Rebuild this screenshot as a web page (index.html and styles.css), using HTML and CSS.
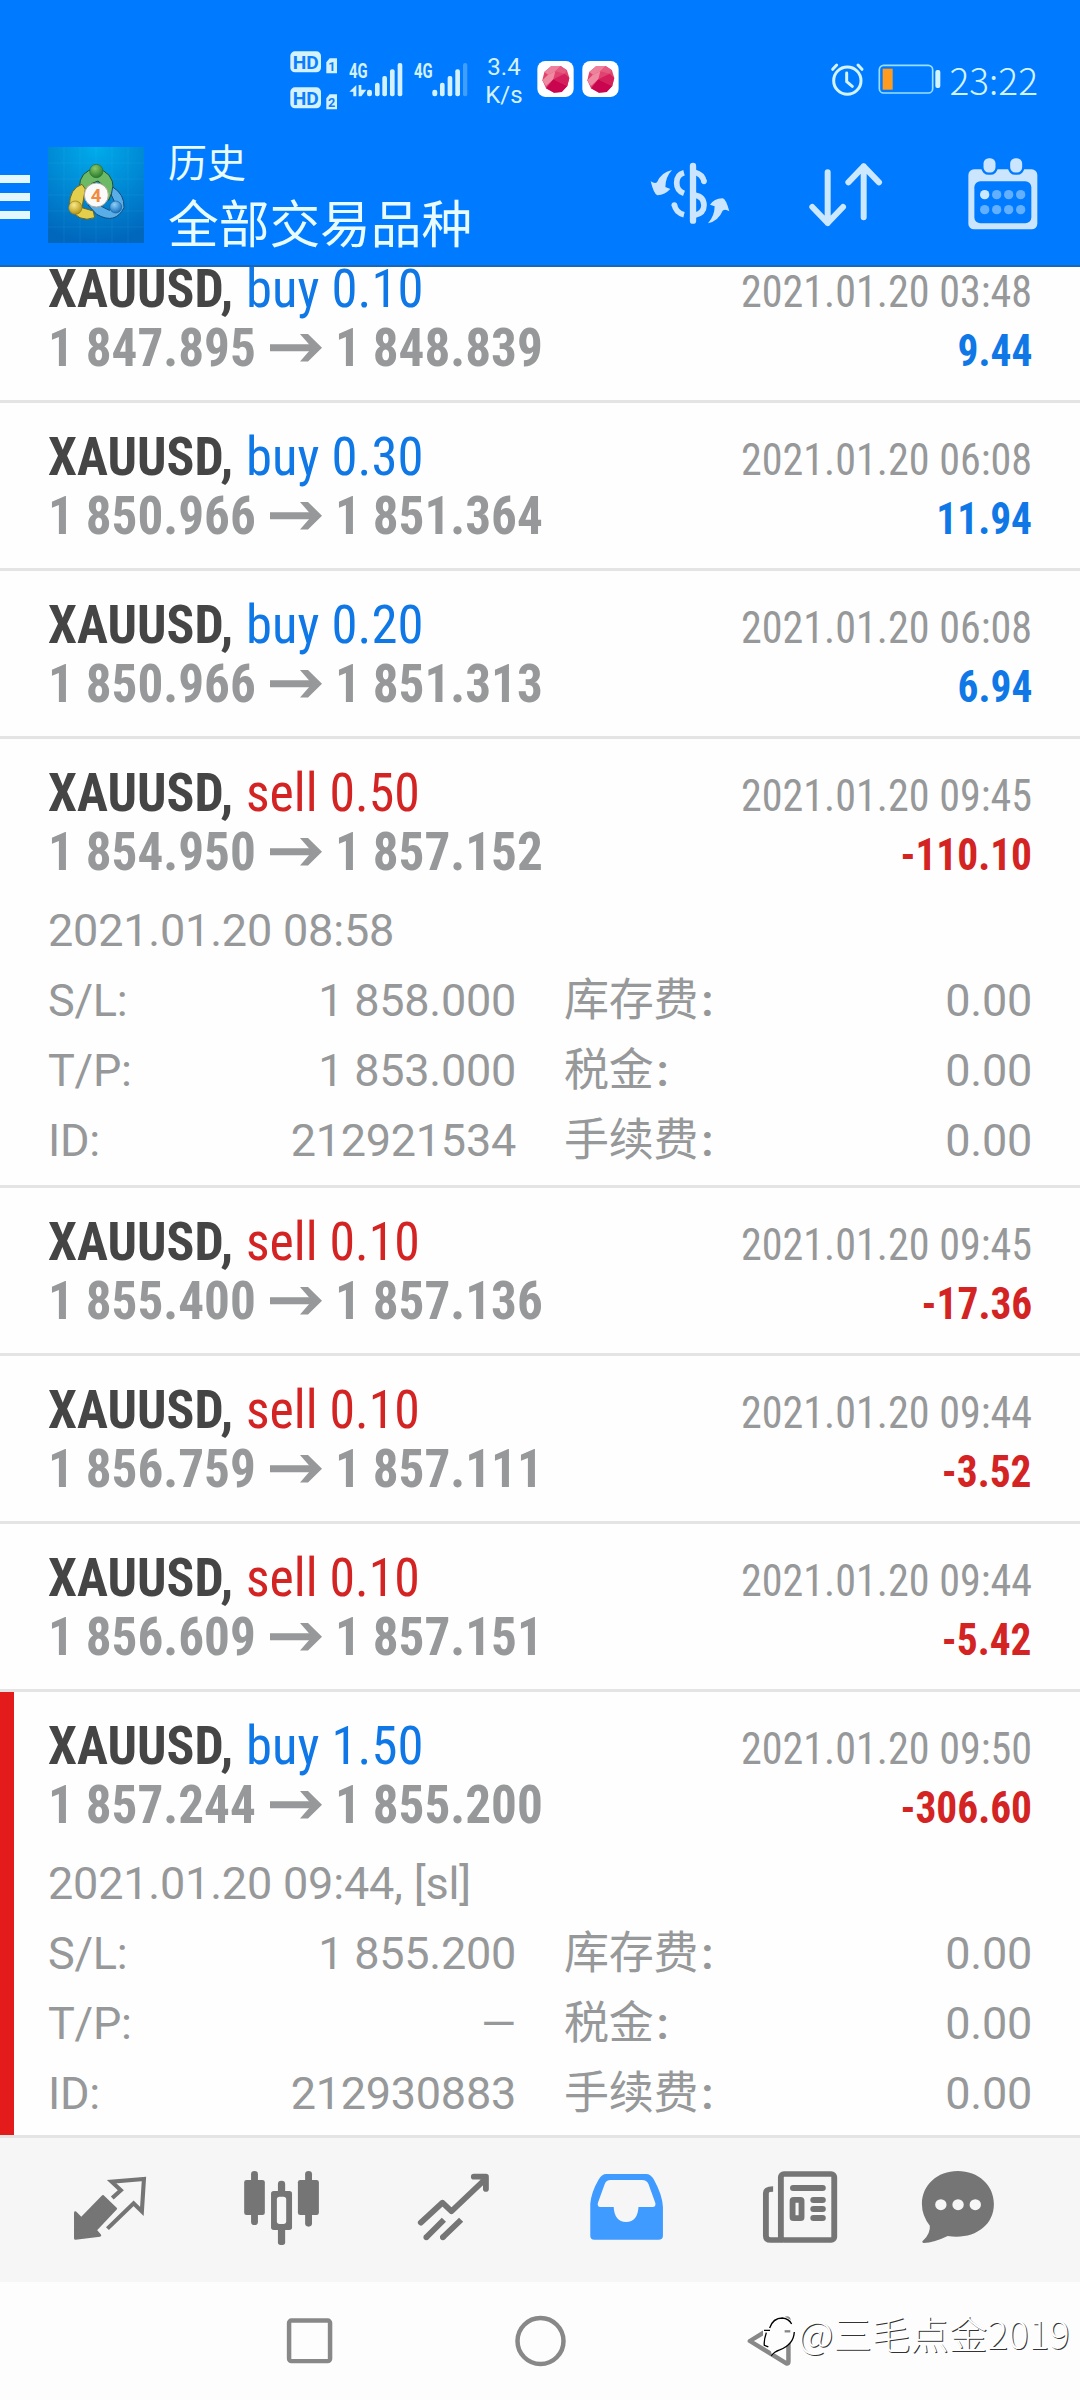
FILE: index.html
```html
<!DOCTYPE html>
<html lang="zh-CN">
<head>
<meta charset="utf-8">
<title>历史</title>
<link rel="stylesheet" href="styles.css">
</head>
<body>
<div class="screen">
  <header class="top">
    <div class="status">
      <svg class="signals" viewBox="50 50 550 200" width="183.3" height="66.7">
        <g fill="#d3f2fd">
          <rect x="60" y="63" width="92" height="63" rx="14"/>
          <rect x="60" y="171" width="92" height="63" rx="14"/>
          <path d="M178 84h22v45h-32V96zM178 192h22v45h-32V204z"/>
          <rect x="290" y="178" width="15" height="20" rx="7"/>
          <rect x="314" y="157" width="14" height="41" rx="6"/>
          <rect x="336" y="137" width="14" height="61" rx="6"/>
          <rect x="359" y="117" width="14" height="81" rx="6"/>
          <rect x="382" y="98" width="14" height="100" rx="6"/>
          <rect x="486" y="178" width="15" height="20" rx="7"/>
          <rect x="509" y="157" width="14" height="41" rx="6"/>
          <rect x="532" y="137" width="14" height="61" rx="6"/>
          <rect x="555" y="117" width="14" height="81" rx="6"/>
          <rect x="578" y="98" width="13" height="100" rx="6" opacity=".3"/>
          <path d="M258 164v34h-9v-14h-12zM265 164h8v14h15l-15 20h-8z"/>
        </g>
        <g class="badge-text">
          <text x="67" y="117" font-size="57" textLength="78" lengthAdjust="spacingAndGlyphs">HD</text>
          <text x="67" y="225" font-size="57" textLength="78" lengthAdjust="spacingAndGlyphs">HD</text>
          <text x="174" y="121" font-size="38">1</text>
          <text x="173" y="229" font-size="38">2</text>
        </g>
        <g class="net-text">
          <text x="236" y="142" font-size="59" textLength="56" lengthAdjust="spacingAndGlyphs">4G</text>
          <text x="431" y="142" font-size="59" textLength="56" lengthAdjust="spacingAndGlyphs">4G</text>
        </g>
      </svg>
      <div class="speed"><span>3.4</span><span>K/s</span></div>
      <svg class="gems" viewBox="800 90 250 115" width="83.3" height="38.3">
        <defs>
          <g id="gem">
            <rect x="801" y="93" width="109" height="108" rx="24" fill="#fff"/>
            <path d="M843 108h28l19 13 7 23-6 24-17 18-23 2-24-13-11-24 6-25z" fill="#e0436f"/>
            <path d="M843 108h28l-16 16-22 10-11-8z" fill="#ed819b"/>
            <path d="M871 108l19 13-7 10-28-7z" fill="#e55a80"/>
            <path d="M816 151l17-17 22-10-6 24-22 20z" fill="#ee8aa1"/>
            <path d="M827 175l22-27 42 20-17 18-23 2z" fill="#c9054f"/>
            <path d="M883 131l14 13-6 24-42-20z" fill="#d41f5c"/>
          </g>
        </defs>
        <use href="#gem"/><use href="#gem" x="135"/>
      </svg>
      <svg class="alarm" viewBox="85 60 110 115" width="36.7" height="38.3" fill="none" stroke="#d3f4ff" stroke-width="9" stroke-linecap="round" stroke-linejoin="round">
        <circle cx="140" cy="122" r="41"/><path d="M138 99v26l17 14M96 88l12-13M184 88l-12-13"/>
      </svg>
      <svg class="battery" viewBox="230 70 195 95" width="65" height="31.7">
        <rect x="237" y="77" width="160" height="83" rx="13" fill="none" stroke="#9adfff" stroke-width="5"/>
        <rect x="247" y="87" width="30" height="63" fill="#ff9b1e"/>
        <rect x="405" y="91" width="15" height="54" rx="6" fill="#d3f4ff"/>
      </svg>
      <span class="clock">23:22</span>
    </div>
    <div class="appbar">
      <div class="menu"><i></i><i></i><i></i></div>
      <svg class="logo" viewBox="144 50 288 288" width="96" height="96">
        <defs>
          <radialGradient id="sky" cx=".5" cy="0" r="1"><stop offset="0" stop-color="#00acec"/><stop offset=".55" stop-color="#0086d2"/><stop offset="1" stop-color="#0067bd"/></radialGradient>
          <radialGradient id="gr" cx=".4" cy=".3" r=".7"><stop offset="0" stop-color="#8cc86a"/><stop offset="1" stop-color="#2a7d2c"/></radialGradient>
          <radialGradient id="ye" cx=".4" cy=".3" r=".7"><stop offset="0" stop-color="#fbe98a"/><stop offset="1" stop-color="#b39414"/></radialGradient>
          <radialGradient id="bl" cx=".4" cy=".3" r=".7"><stop offset="0" stop-color="#8fd0f8"/><stop offset="1" stop-color="#1871bd"/></radialGradient>
        </defs>
        <rect x="144" y="50" width="288" height="288" fill="url(#sky)"/>
        <path d="M144 98h288M144 146h288M144 194h288M144 242h288M144 290h288M192 50v288M240 50v288M288 50v288M336 50v288M384 50v288" stroke="#5ad0f5" stroke-opacity=".15" stroke-width="2"/>
        <g stroke="#1d4f35" stroke-width="3">
          <path d="M238 172q0-50 50-58q52 10 52 62l-14 34-22-28 8-14-18-16-20 8-20 22z" fill="#6dba66"/>
          <path d="M246 162q-38 12-38 66q26 52 76 34l-4-20-34-10 10-56z" fill="#e3cf4c" stroke="#6c6420"/>
          <path d="M338 170q36 22 34 62q-26 52-82 20l-26-28 24-4 40 20 20-16-14-30z" fill="#5aaee8" stroke="#174c7c"/>
        </g>
        <circle cx="289" cy="122" r="20" fill="url(#gr)" stroke="#256b34" stroke-width="2"/>
        <circle cx="226" cy="232" r="20" fill="url(#ye)" stroke="#8a7a1c" stroke-width="2"/>
        <circle cx="347" cy="230" r="18" fill="url(#bl)" stroke="#1d5f9c" stroke-width="2"/>
        <circle cx="289" cy="194" r="36" fill="#fafafa" stroke="#b9a78f" stroke-width="3"/>
        <text class="logo-digit" x="288" y="215" text-anchor="middle">4</text>
      </svg>
      <div class="titles"><span class="title">历史</span><span class="subtitle">全部交易品种</span></div>
      <svg class="act dollar" viewBox="90 95 240 187" width="80" height="62.3">
        <g fill="none" stroke="#cbe5ff" stroke-width="17">
          <path d="M219 107v164" stroke-width="19" stroke-linecap="round"/>
          <path d="M192 127q-22 6-22 30q0 24 22 32"/>
          <path d="M163 223q4 24 29 30"/>
          <path d="M163 224v0M252 153v0" stroke-linecap="round"/>
          <path d="M224 126q24 6 28 28"/>
          <path d="M224 194q28 5 28 31q0 24-28 30"/>
        </g>
        <path fill="#cbe5ff" d="M156 119q-20 22-20 51l15 6q-16 17-39 19q-10-2-20-42q12 8 19 3q12-30 45-37zM264 279q20-22 20-51l-14-5q12-18 37-19q10-1 21 39q-12-8-20-2q-12 30-44 38z"/>
      </svg>
      <svg class="act sort" viewBox="565 95 230 197" width="76.7" height="65.7" fill="none" stroke="#cbe8ff" stroke-width="18" stroke-linecap="round" stroke-linejoin="round">
        <path d="M624 126v152M578 230l46 48 46-48M732 261V108M686 156l46-48 46 48"/>
      </svg>
      <svg class="act cal" viewBox="1040 80 215 220" width="71.7" height="73.3">
        <rect x="1044" y="117" width="207" height="180" rx="17" fill="#cbe5ff"/>
        <rect x="1062" y="153" width="171" height="126" rx="18" fill="#007aff"/>
        <g fill="#cbe5ff" stroke="#007aff" stroke-width="7"><rect x="1086" y="80" width="43" height="50" rx="19"/><rect x="1166" y="80" width="43" height="50" rx="19"/></g>
        <circle cx="1093" cy="193" r="14" fill="#cbe8ff"/>
        <g fill="#62b0ff"><circle cx="1129" cy="193" r="14"/><circle cx="1165" cy="193" r="14"/><circle cx="1201" cy="193" r="14"/><circle cx="1093" cy="238" r="14"/><circle cx="1129" cy="238" r="14"/><circle cx="1165" cy="238" r="14"/><circle cx="1201" cy="238" r="14"/></g>
      </svg>
    </div>
  </header>

  <svg width="0" height="0" class="defs"><defs>
    <g id="arrow" fill="#969899"><path d="M0 10.2h45v7H0z"/><path d="M30 0h8l14 13.7-14 13.7h-8l12-13.7z"/></g>
  </defs></svg>

  <main class="list">
    <section class="deal">
      <div class="line"><div class="name"><b>XAUUSD,</b> <span class="buy">buy 0.10</span></div><div class="time">2021.01.20 03:48</div></div>
      <div class="line second"><div class="price"><span>1 847.895</span><svg width="52" height="28"><use href="#arrow"/></svg><span>1 848.839</span></div><div class="profit plus">9.44</div></div>
    </section>
    <section class="deal">
      <div class="line"><div class="name"><b>XAUUSD,</b> <span class="buy">buy 0.30</span></div><div class="time">2021.01.20 06:08</div></div>
      <div class="line second"><div class="price"><span>1 850.966</span><svg width="52" height="28"><use href="#arrow"/></svg><span>1 851.364</span></div><div class="profit plus">11.94</div></div>
    </section>
    <section class="deal">
      <div class="line"><div class="name"><b>XAUUSD,</b> <span class="buy">buy 0.20</span></div><div class="time">2021.01.20 06:08</div></div>
      <div class="line second"><div class="price"><span>1 850.966</span><svg width="52" height="28"><use href="#arrow"/></svg><span>1 851.313</span></div><div class="profit plus">6.94</div></div>
    </section>
    <section class="deal open">
      <div class="line"><div class="name"><b>XAUUSD,</b> <span class="sell">sell 0.50</span></div><div class="time">2021.01.20 09:45</div></div>
      <div class="line second"><div class="price"><span>1 854.950</span><svg width="52" height="28"><use href="#arrow"/></svg><span>1 857.152</span></div><div class="profit minus">-110.10</div></div>
      <div class="opened">2021.01.20 08:58</div>
      <div class="details">
        <div><span>S/L:</span><span>1 858.000</span></div><div><span>库存费<i>:</i></span><span>0.00</span></div>
        <div><span>T/P:</span><span>1 853.000</span></div><div><span>税金<i>:</i></span><span>0.00</span></div>
        <div><span>ID:</span><span>212921534</span></div><div><span>手续费<i>:</i></span><span>0.00</span></div>
      </div>
    </section>
    <section class="deal">
      <div class="line"><div class="name"><b>XAUUSD,</b> <span class="sell">sell 0.10</span></div><div class="time">2021.01.20 09:45</div></div>
      <div class="line second"><div class="price"><span>1 855.400</span><svg width="52" height="28"><use href="#arrow"/></svg><span>1 857.136</span></div><div class="profit minus">-17.36</div></div>
    </section>
    <section class="deal">
      <div class="line"><div class="name"><b>XAUUSD,</b> <span class="sell">sell 0.10</span></div><div class="time">2021.01.20 09:44</div></div>
      <div class="line second"><div class="price"><span>1 856.759</span><svg width="52" height="28"><use href="#arrow"/></svg><span>1 857.111</span></div><div class="profit minus">-3.52</div></div>
    </section>
    <section class="deal">
      <div class="line"><div class="name"><b>XAUUSD,</b> <span class="sell">sell 0.10</span></div><div class="time">2021.01.20 09:44</div></div>
      <div class="line second"><div class="price"><span>1 856.609</span><svg width="52" height="28"><use href="#arrow"/></svg><span>1 857.151</span></div><div class="profit minus">-5.42</div></div>
    </section>
    <section class="deal open stopped">
      <div class="line"><div class="name"><b>XAUUSD,</b> <span class="buy">buy 1.50</span></div><div class="time">2021.01.20 09:50</div></div>
      <div class="line second"><div class="price"><span>1 857.244</span><svg width="52" height="28"><use href="#arrow"/></svg><span>1 855.200</span></div><div class="profit minus">-306.60</div></div>
      <div class="opened">2021.01.20 09:44, [sl]</div>
      <div class="details">
        <div><span>S/L:</span><span>1 855.200</span></div><div><span>库存费<i>:</i></span><span>0.00</span></div>
        <div><span>T/P:</span><span>—</span></div><div><span>税金<i>:</i></span><span>0.00</span></div>
        <div><span>ID:</span><span>212930883</span></div><div><span>手续费<i>:</i></span><span>0.00</span></div>
      </div>
    </section>
  </main>

  <nav class="tabs">
    <svg viewBox="69.7 24 499.5 432" preserveAspectRatio="none">
      <path fill="#757575" stroke="#757575" stroke-width="8" stroke-linejoin="round" d="M219 248l17 18 63-67 37 37-59 64 13 16-71 9z"/>
      <path fill="none" stroke="#757575" stroke-width="12" d="M326 204l25-23-27-26 94-8-6 97-24-24-76 76"/>
    </svg>
    <svg viewBox="569.1 24 499.5 432" preserveAspectRatio="none" fill="#757575">
      <rect x="729" y="123" width="20" height="162" rx="10"/><rect x="709" y="150" width="60" height="105" rx="7"/>
      <rect x="886" y="123" width="20" height="167" rx="10"/><rect x="865" y="150" width="61" height="105" rx="7"/>
      <rect x="807" y="152" width="21" height="40" rx="10"/><rect x="807" y="290" width="21" height="55" rx="8"/>
      <rect x="787" y="183" width="61" height="117" rx="8"/><rect x="804" y="200" width="27" height="82" rx="8" fill="#f6f6f6"/>
    </svg>
    <svg viewBox="1068.6 24 499.5 432" preserveAspectRatio="none" fill="none" stroke="#757575" stroke-width="17" stroke-linejoin="round">
      <path stroke-linecap="round" d="M1222 278l63-60 26 26 98-96M1376 140h35v37M1238 322v0M1286 322v0"/>
      <path d="M1238 322l51-53M1286 322l53-53"/>
      <path fill="#757575" stroke="none" d="M1390 140h22v30z"/>
    </svg>
    <svg viewBox="0 24 499.5 432" preserveAspectRatio="none">
      <path fill="#3f9bff" d="M193 132h115q14 0 23 17q25 47 26 82v86q0 12-13 12H158q-12 0-12-12v-96q3-35 24-72q9-17 23-17z"/>
      <path fill="#f6f6f6" d="M205 150h91q14 0 19 12l20 57q2 12-8 12h-41q-2 44-36 45q-34-1-36-45h-39q-9 0-7-12l20-57q4-12 17-12z"/>
    </svg>
    <svg viewBox="499.5 24 499.5 432" preserveAspectRatio="none">
      <path fill="none" stroke="#757575" stroke-width="17" d="M677 177q-21 0-21 12v128q0 13 14 13h35"/>
      <rect x="699.500" y="132" width="155" height="198" rx="9" fill="none" stroke="#757575" stroke-width="17"/>
      <g fill="#757575"><rect x="726" y="165" width="104" height="18" rx="9"/><rect x="785" y="201" width="45" height="18" rx="9"/><rect x="785" y="228" width="45" height="18" rx="9"/><rect x="785" y="255" width="45" height="18" rx="9"/></g>
      <rect x="733.500" y="209.500" width="26" height="55" rx="3" fill="none" stroke="#757575" stroke-width="17"/>
    </svg>
    <svg viewBox="998.9 24 499.5 432" preserveAspectRatio="none">
      <path fill="#757575" d="M1213 123c60 0 105 42 105 99c0 68-61 108-134 96q-40 20-70 21q-8-3 0-9q20-21 18-43q-23-30-23-65c0-57 45-99 104-99z"/>
      <g fill="#f6f6f6"><circle cx="1164" cy="224" r="16.500"/><circle cx="1214" cy="224" r="16.500"/><circle cx="1264" cy="224" r="16.500"/></g>
    </svg>
  </nav>

  <div class="sysnav">
    <svg viewBox="561.9 456 670.8 354" preserveAspectRatio="none"><rect x="838" y="571.500" width="119" height="122" rx="7" fill="none" stroke="#888" stroke-width="13"/></svg>
    <svg viewBox="0 0 231 118"><circle cx="115.500" cy="59" r="23" fill="none" stroke="#888" stroke-width="4.500"/></svg>
    <svg viewBox="335.4 456 670.8 354" preserveAspectRatio="none">
      <path fill="none" stroke="#888" stroke-width="13" stroke-linejoin="round" d="M608 633l106-67q6-2 6 5v124q0 7-6 5z"/>
    </svg>
    <div class="watermark">
      <svg viewBox="100 65 100 130" width="33.3" height="43.3">
        <path fill="#fdfdfd" d="M92 108q14-42 62-40q42 6 42 48q-6 36-46 52q-14 6-22 20l-8-26-22-14z"/>
        <path fill="none" stroke="#000" stroke-width="4" d="M120 104q10-30 38-30q20 2 28 18M103 111h18M110 118q-8 24-6 38l12 5M194 116q-2 38-44 54q-16 5-25 18"/>
        <path stroke="#888" stroke-width="7" d="M165 114h17"/>
      </svg>
      <span>@三毛点金2019</span>
    </div>
  </div>
</div>
</body>
</html>
```

FILE: styles.css
```css
* { box-sizing: border-box; }
body { margin: 0; background: #fdfdfd; }
svg { display: block; flex: none; }
.defs { position: absolute; }
.screen {
  width: 1080px;
  height: 2400px;
  display: flex;
  flex-direction: column;
  overflow: hidden;
  font-family: Roboto, "Noto Sans CJK SC", sans-serif;
}

/* header */
.top {
  height: 267px;
  flex: none;
  background: #007aff;
  border-bottom: 2px solid #1c66b4;
}
.status {
  height: 130px;
  padding: 0 0 0 286.700px;
  display: flex;
  align-items: flex-start;
}
.signals { margin-top: 46.700px; }
.badge-text { font-family: Roboto, sans-serif; font-weight: 700; fill: #0b7dff; }
.net-text { font-family: Roboto, sans-serif; font-weight: 700; fill: #d3f2fd; }
.speed {
  width: 64px;
  flex: none;
  margin: 53px 0 0 2px;
  display: flex;
  flex-direction: column;
  align-items: center;
  font-size: 24px;
  line-height: 28px;
  color: #d3f2fd;
}
.gems { margin: 60px 0 0 0.700px; }
.alarm { margin: 60px 0 0 208.700px; }
.battery { margin: 63.300px 0 0 11.700px; }
.clock {
  margin: 56px 0 0 7.500px;
  font-family: "Noto Sans CJK SC", sans-serif;
  font-weight: 300;
  font-size: 37px;
  line-height: 46px;
  color: #d3f4ff;
}
.appbar { height: 135px; display: flex; align-items: flex-start; }
.menu { width: 30px; margin-top: 45px; display: grid; gap: 10px; }
.menu i { height: 8px; background: #e3f7ff; }
.logo { margin: 17px 0 0 18px; }
.logo-digit { font-family: Roboto, sans-serif; font-weight: 700; font-size: 56px; fill: #f28b3c; }
.titles {
  width: 481px;
  margin: 3px 0 0 24px;
  display: flex;
  flex-direction: column;
  color: #e8fbff;
  font-family: "Noto Sans CJK SC", sans-serif;
}
.title { font-size: 39px; line-height: 54px; }
.subtitle { font-size: 50.700px; line-height: 68px; }
.dollar { margin: 31.700px 0 0 1px; }
.sort { margin: 31.700px 0 0 78.300px; }
.cal { margin: 26.700px 0 0 81.700px; }

/* deals */
.list { height: 1868px; flex: none; overflow: hidden; background: #fefefe; }
.deal { height: 168px; padding: 24px 48px 0; border-bottom: 3px solid #e4e4e4; }
.deal:first-child { margin-top: -32px; }
.deal.open { height: 449px; }
.stopped { position: relative; }
.stopped::before {
  content: "";
  position: absolute;
  left: 0;
  top: 0;
  width: 14px;
  height: 100%;
  background: #e31b1b;
}
.line {
  height: 59px;
  display: flex;
  justify-content: space-between;
  align-items: baseline;
  font-family: "Roboto Condensed", Roboto, sans-serif;
  font-stretch: 75%;
  line-height: 60px;
  white-space: nowrap;
}
.name { font-size: 54px; color: #454545; }
.name b, .name span, .price span { display: inline-block; transform-origin: left; }
.name b { transform: scaleX(0.958); margin-right: -8px; }
.name .buy { transform: scaleX(0.976); }
.name .sell { transform: scaleX(0.958); }
.buy, .plus { color: #0f78e6; }
.sell, .minus { color: #d32323; }
.time { font-size: 45px; color: #969899; transform: scaleX(0.936); transform-origin: right; }
.price {
  display: flex;
  align-items: center;
  font-size: 54px;
  font-weight: 700;
  color: #969899;
}
.price span { transform: scaleX(0.948); }
.price svg { margin: 0 13px 0 3px; }
.profit { font-size: 45px; font-weight: 700; transform: scaleX(0.92); transform-origin: right; }
.opened { margin-top: 15px; font-size: 45px; line-height: 70px; letter-spacing: -0.200px; color: #969899; }
.details {
  display: grid;
  grid-template-columns: 468px 468px;
  column-gap: 48px;
  grid-auto-rows: 70px;
  font-size: 45px;
  line-height: 70px;
  letter-spacing: -0.250px;
  color: #969899;
}
.details div { display: flex; justify-content: space-between; }
.details i { font-style: normal; font-weight: 600; margin-left: 3px; }

/* bottom bars */
.tabs {
  height: 147px;
  flex: none;
  display: flex;
  padding: 0 24px;
  background: #f6f6f6;
  border-top: 3px solid #e4e4e4;
}
.tabs svg { width: 172px; height: 144px; }
.sysnav {
  height: 118px;
  flex: none;
  display: flex;
  justify-content: center;
  position: relative;
  background: #fdfdfd;
}
.sysnav > svg { width: 231px; height: 118px; }
.watermark {
  position: absolute;
  left: 763px;
  top: 23px;
  display: flex;
  align-items: center;
  gap: 2px;
  font-family: "Noto Sans CJK SC", sans-serif;
  font-weight: 300;
  font-size: 38.500px;
  line-height: 54px;
  color: #fff;
  text-shadow: 1px 1px 0 #333;
  white-space: nowrap;
}
.watermark svg { margin-top: 10px; }
```
